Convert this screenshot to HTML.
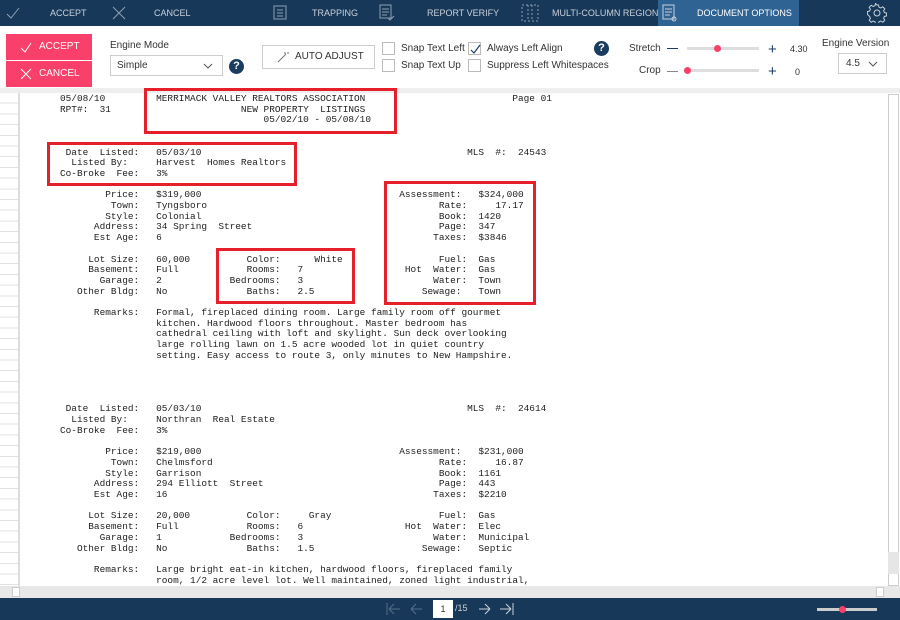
<!DOCTYPE html>
<html><head><meta charset="utf-8"><style>
*{margin:0;padding:0;box-sizing:border-box}
body{width:900px;height:620px;overflow:hidden;background:#fff;font-family:"Liberation Sans",sans-serif;position:relative}
.top{position:absolute;left:0;top:0;width:900px;height:26px;background:#173858}
.top span{position:absolute;top:8px;font-size:9px;color:#c9d1db}
.tab{position:absolute;left:658px;top:0;width:141px;height:26px;background:#2f6393}
.bar2{position:absolute;left:0;top:26px;width:900px;height:62px;background:#fff}
.btn{position:absolute;left:6px;width:86px;height:26px;background:#f8406a;color:#fff;font-size:10px}
.lbl{position:absolute;font-size:10px;color:#333}
.cb{position:absolute;width:13px;height:13px;border:1px solid #bbb;background:#fff}
.q{position:absolute;width:15px;height:15px;border-radius:50%;background:#1a3c5e;color:#fff;font-size:11px;font-weight:bold;text-align:center;line-height:15px}
.doc{position:absolute;left:0;top:88px;width:900px;height:510px;background:#fff;overflow:hidden}
.gutter{position:absolute;left:0;top:5px;width:20px;height:500px;border-right:2px solid #ddd;background:repeating-linear-gradient(#fff 0,#fff 9.7px,#e2e2e2 9.7px,#e2e2e2 10.7px)}
pre{position:absolute;left:60px;top:6px;font-family:"Liberation Mono",monospace;font-size:9.43px;line-height:10.7px;color:#222}
.rb{position:absolute;border:3px solid #e5202a}
.bot{position:absolute;left:0;top:598px;width:900px;height:22px;background:#173858}
</style></head><body>
<div class="top">
<svg style="position:absolute;left:6px;top:6px" width="14" height="14"><path d="M1 8 L5 12 L13 2" stroke="#8fa0b3" fill="none" stroke-width="1"/></svg>
<span style="left:50px">ACCEPT</span>
<svg style="position:absolute;left:112px;top:6px" width="14" height="14"><path d="M1 1 L13 13 M13 1 L1 13" stroke="#8fa0b3" stroke-width="1"/></svg>
<span style="left:154px">CANCEL</span>
<svg style="position:absolute;left:272px;top:4px" width="16" height="17"><rect x="2" y="2" width="12" height="13" fill="none" stroke="#8fa0b3"/><path d="M5 6h6M5 9h6M5 12h6" stroke="#8fa0b3"/></svg>
<span style="left:312px">TRAPPING</span>
<svg style="position:absolute;left:379px;top:4px" width="16" height="17"><rect x="1" y="1" width="11" height="13" fill="none" stroke="#8fa0b3"/><path d="M3 5h7M3 8h7M3 11h5M9 14l2 2 4-4" stroke="#8fa0b3" fill="none"/></svg>
<span style="left:427px">REPORT VERIFY</span>
<svg style="position:absolute;left:521px;top:4px" width="18" height="18"><rect x="1" y="1" width="16" height="16" fill="none" stroke="#8fa0b3" stroke-dasharray="2 2"/><path d="M7 1v16M11 1v16" stroke="#8fa0b3" stroke-dasharray="2 2"/></svg>
<span style="left:552px">MULTI-COLUMN REGION</span>
<div class="tab"></div>
<svg style="position:absolute;left:662px;top:4px" width="16" height="18"><rect x="1" y="1" width="11" height="14" fill="none" stroke="#c9d1db"/><path d="M3 5h7M3 8h7M3 11h5" stroke="#c9d1db"/><circle cx="12" cy="15" r="2" fill="none" stroke="#c9d1db"/></svg>
<span style="left:697px;color:#fff">DOCUMENT OPTIONS</span>
<svg style="position:absolute;left:867px;top:3px" width="20" height="20" viewBox="0 0 20 20"><path d="M10 2l1.5 0 .5 2.2 1.8.8 2-1.2 2 2-1.2 2 .8 1.8 2.2.5v2.8l-2.2.5-.8 1.8 1.2 2-2 2-2-1.2-1.8.8-.5 2.2H8.5l-.5-2.2-1.8-.8-2 1.2-2-2 1.2-2-.8-1.8L.4 11.4V8.6l2.2-.5.8-1.8-1.2-2 2-2 2 1.2 1.8-.8.5-2.2z" fill="none" stroke="#c9d1db"/><circle cx="10" cy="10" r="3" fill="none" stroke="#c9d1db"/></svg>
</div>
<div class="bar2">
<div class="btn" style="top:8px"><svg style="position:absolute;left:14px;top:7px" width="12" height="12"><path d="M1 7l4 4 6-9" stroke="#fff" fill="none"/></svg><span style="position:absolute;left:33px;top:7px">ACCEPT</span></div>
<div class="btn" style="top:35px"><svg style="position:absolute;left:14px;top:7px" width="12" height="12"><path d="M1 1l10 10M11 1L1 11" stroke="#fff"/></svg><span style="position:absolute;left:33px;top:7px">CANCEL</span></div>
<div class="lbl" style="left:110px;top:14px">Engine Mode</div>
<div style="position:absolute;left:110px;top:29px;width:113px;height:21px;border:1px solid #ccc"><span style="position:absolute;left:6px;top:4px;font-size:10px;color:#333">Simple</span><svg style="position:absolute;left:92px;top:7px" width="10" height="6"><path d="M1 1l4 4 4-4" stroke="#555" fill="none"/></svg></div>
<div class="q" style="left:229px;top:33px">?</div>
<div style="position:absolute;left:262px;top:19px;width:113px;height:24px;border:1px solid #ccc"><svg style="position:absolute;left:14px;top:5px" width="12" height="12"><path d="M1 11L9 3M8 1v2M10 2h2" stroke="#777" fill="none"/></svg><span style="position:absolute;left:32px;top:5px;font-size:10px;color:#333">AUTO ADJUST</span></div>
<div class="cb" style="left:382px;top:16px"></div><div class="lbl" style="left:401px;top:17px">Snap Text Left</div>
<div class="cb" style="left:382px;top:33px"></div><div class="lbl" style="left:401px;top:34px">Snap Text Up</div>
<div class="cb" style="left:468px;top:16px"><svg style="position:absolute;left:1px;top:1px" width="11" height="11"><path d="M1 6l3 3 6-8" stroke="#1a3c5e" fill="none" stroke-width="1.2"/></svg></div><div class="lbl" style="left:487px;top:17px">Always Left Align</div>
<div class="cb" style="left:468px;top:33px"></div><div class="lbl" style="left:487px;top:34px">Suppress Left Whitespaces</div>
<div class="q" style="left:594px;top:15px">?</div>
<div class="lbl" style="left:629px;top:17px">Stretch</div>
<div style="position:absolute;left:667px;top:22px;width:11px;height:1px;background:#1a3c5e"></div>
<div style="position:absolute;left:687px;top:21px;width:72px;height:3px;background:#ddd"></div>
<div style="position:absolute;left:714px;top:19px;width:7px;height:7px;border-radius:50%;background:#f8406a"></div>
<div style="position:absolute;left:768px;top:15px;font-size:15px;color:#1a3c5e">+</div>
<div style="position:absolute;left:790px;top:18px;font-size:9px;color:#333">4.30</div>
<div class="lbl" style="left:639px;top:39px">Crop</div>
<div style="position:absolute;left:667px;top:45px;width:11px;height:1px;background:#888"></div>
<div style="position:absolute;left:687px;top:43px;width:72px;height:3px;background:#ddd"></div>
<div style="position:absolute;left:684px;top:41px;width:7px;height:7px;border-radius:50%;background:#f8406a"></div>
<div style="position:absolute;left:768px;top:37px;font-size:15px;color:#1a3c5e">+</div>
<div style="position:absolute;left:795px;top:41px;font-size:9px;color:#333">0</div>
<div class="lbl" style="left:822px;top:12px">Engine Version</div>
<div style="position:absolute;left:838px;top:27px;width:49px;height:21px;border:1px solid #ccc"><span style="position:absolute;left:7px;top:4px;font-size:10px;color:#333">4.5</span><svg style="position:absolute;left:29px;top:7px" width="10" height="6"><path d="M1 1l4 4 4-4" stroke="#555" fill="none"/></svg></div>
</div>
<div class="doc">
<div style="position:absolute;left:0;top:0;width:900px;height:5px;background:#eee"></div>
<div class="gutter"></div>
<pre>05/08/10         MERRIMACK VALLEY REALTORS ASSOCIATION                          Page 01
RPT#:  31                       NEW PROPERTY  LISTINGS
                                    05/02/10 - 05/08/10


 Date  Listed:   05/03/10                                               MLS  #:  24543
  Listed By:     Harvest  Homes Realtors
Co-Broke  Fee:   3%

        Price:   $319,000                                   Assessment:   $324,000
         Town:   Tyngsboro                                         Rate:     17.17
        Style:   Colonial                                          Book:  1420
      Address:   34 Spring  Street                                 Page:  347
      Est Age:   6                                                Taxes:  $3846

     Lot Size:   60,000          Color:      White                 Fuel:  Gas
     Basement:   Full            Rooms:   7                  Hot  Water:  Gas
       Garage:   2            Bedrooms:   3                       Water:  Town
   Other Bldg:   No              Baths:   2.5                   Sewage:   Town

      Remarks:   Formal, fireplaced dining room. Large family room off gourmet
                 kitchen. Hardwood floors throughout. Master bedroom has
                 cathedral ceiling with loft and skylight. Sun deck overlooking
                 large rolling lawn on 1.5 acre wooded lot in quiet country
                 setting. Easy access to route 3, only minutes to New Hampshire.




 Date  Listed:   05/03/10                                               MLS  #:  24614
  Listed By:     Northran  Real Estate
Co-Broke  Fee:   3%

        Price:   $219,000                                   Assessment:   $231,000
         Town:   Chelmsford                                        Rate:     16.87
        Style:   Garrison                                          Book:  1161
      Address:   294 Elliott  Street                               Page:  443
      Est Age:   16                                               Taxes:  $2210

     Lot Size:   20,000          Color:     Gray                   Fuel:  Gas
     Basement:   Full            Rooms:   6                  Hot  Water:  Elec
       Garage:   1            Bedrooms:   3                       Water:  Municipal
   Other Bldg:   No              Baths:   1.5                   Sewage:   Septic

      Remarks:   Large bright eat-in kitchen, hardwood floors, fireplaced family
                 room, 1/2 acre level lot. Well maintained, zoned light industrial,</pre>
<div class="rb" style="left:144px;top:0px;width:253px;height:46px"></div>
<div class="rb" style="left:47px;top:54px;width:250px;height:44px"></div>
<div class="rb" style="left:216px;top:160px;width:139px;height:56px"></div>
<div class="rb" style="left:384px;top:93px;width:152px;height:124px"></div>
<div style="position:absolute;left:888px;top:6px;width:11px;height:492px;border:1px solid #ccc;background:#fff"></div>
<div style="position:absolute;left:888px;top:464px;width:11px;height:22px;background:#e6e6e6"></div>
<div style="position:absolute;left:0;top:498px;width:900px;height:12px;background:#e8e8e8"></div>
<div style="position:absolute;left:12px;top:499px;width:8px;height:10px;background:#fff;border:1px solid #ccc"></div>
<div style="position:absolute;left:876px;top:499px;width:8px;height:10px;background:#fff;border:1px solid #ccc"></div>
</div>
<div class="bot">
<svg style="position:absolute;left:385px;top:4px" width="130" height="14"><path d="M2 1v12M4 7h11M4 7l5-5M4 7l5 5M26 7h11M26 7l5-5M26 7l5 5" stroke="#55708c" fill="none"/><path d="M94 7h11M105 7l-5-5M105 7l-5 5M115 7h11M126 7l-5-5M126 7l-5 5M128 1v12" stroke="#c9d1db" fill="none"/></svg>
<div style="position:absolute;left:433px;top:2px;width:20px;height:18px;background:#fff;font-size:9px;text-align:center;line-height:18px;color:#333">1</div>
<div style="position:absolute;left:455px;top:5px;font-size:9px;color:#c9d1db">/15</div>
<div style="position:absolute;left:817px;top:10px;width:60px;height:3px;background:#ccc"></div>
<div style="position:absolute;left:839px;top:8px;width:7px;height:7px;border-radius:50%;background:#f8406a"></div>
</div>
</body></html>
